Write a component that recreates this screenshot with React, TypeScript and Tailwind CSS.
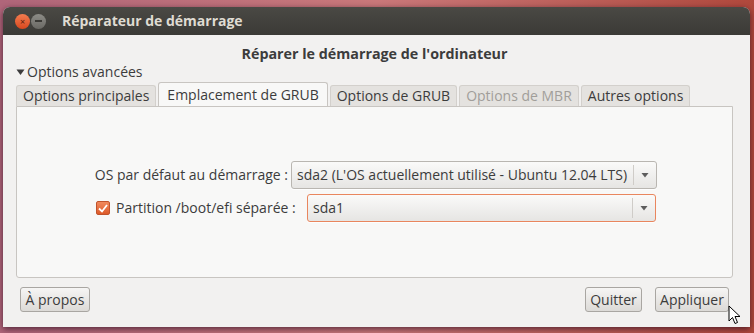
const font = { fontFamily: '"Open Sans", "Noto Sans", sans-serif' }

const tabs = [
  { label: 'Options principales', active: false, disabled: false },
  { label: 'Emplacement de GRUB', active: true, disabled: false },
  { label: 'Options de GRUB', active: false, disabled: false },
  { label: 'Options de MBR', active: false, disabled: true },
  { label: 'Autres options', active: false, disabled: false },
]

function Arrow() {
  return (
    <svg width="8" height="6" viewBox="0 0 8 6" className="text-[#5d5d5d]">
      <path d="M0.5 1 L7.5 1 L4 5.5 Z" fill="currentColor" />
    </svg>
  )
}

function Combo({ value, width, focused }: { value: string; width: string; focused?: boolean }) {
  return (
    <div
      className={`flex h-[28px] ${width} items-center rounded-[3px] border bg-gradient-to-b from-[#fafaf9] to-[#e6e5e3] shadow-[0_1px_0_rgba(255,255,255,0.8)] ${
        focused ? 'border-[#e9865e]' : 'border-[#b9b6b1]'
      }`}
    >
      <div className="flex-1 truncate pl-[5px] text-[14px] leading-[18px] text-[#3c3c3c]">{value}</div>
      <div className="flex h-[20px] w-[23px] items-center justify-center border-l border-[#cfccc8]">
        <Arrow />
      </div>
    </div>
  )
}

function Button({ label, width }: { label: string; width: string }) {
  return (
    <div
      className={`flex h-[25px] ${width} items-center justify-center rounded-[3px] border border-[#a9a6a2] bg-gradient-to-b from-[#f6f5f4] to-[#dcdad7] text-[14px] leading-[18px] text-[#3c3c3c]`}
    >
      {label}
    </div>
  )
}

export default function App() {
  return (
    <div
      style={font}
      className="relative h-[333px] w-[754px] overflow-hidden bg-gradient-to-r from-[#b0667a] via-[#c9787a] to-[#b0483c] px-[3px] pt-[7px]"
    >
      <div className="flex h-[320px] w-[747px] flex-col overflow-hidden rounded-t-[7px] bg-[#f2f1f0] shadow-[0_2px_6px_rgba(40,10,30,0.7)]">
        {/* title bar */}
        <div className="flex h-[28px] items-center bg-gradient-to-b from-[#4a4944] to-[#3b3a36] pl-[12px]">
          <div className="flex h-[15px] w-[15px] items-center justify-center rounded-full bg-gradient-to-b from-[#f37c4f] to-[#d8471c] text-[9px] leading-none text-[#5a1d0c]">
            ×
          </div>
          <div className="ml-[1px] flex h-[15px] w-[15px] items-center justify-center rounded-full bg-gradient-to-b from-[#8d8c87] to-[#6a6964]">
            <div className="h-[1.5px] w-[7px] bg-[#3b3a36]" />
          </div>
          <div className="ml-[16px] text-[14px] font-bold leading-[18px] text-[#dfdbd2]">Réparateur de démarrage</div>
        </div>

        {/* body */}
        <div className="flex flex-1 flex-col pl-[13px] pr-[17px] leading-[18px]">
          <div className="mt-[10px] text-center text-[14.3px] font-bold text-[#3c3c3c]">
            Réparer le démarrage de l'ordinateur
          </div>
          <div className="mt-0 flex items-center gap-[2px] text-[14px] text-[#3c3c3c]">
            <svg width="9" height="8" viewBox="0 0 9 8">
              <path d="M0.5 1.5 L8.5 1.5 L4.5 7 Z" fill="#3c3c3c" />
            </svg>
            Options avancées
          </div>

          {/* tabs */}
          <div className="mt-[1px] flex items-end gap-[2px]">
            {tabs.map((t) => (
              <div
                key={t.label}
                className={`flex items-center rounded-t-[3px] border border-b-0 text-[14px] ${
                  t.active
                    ? 'h-[24px] border-[#c8c5c1] bg-[#f8f8f7] px-[8px] text-[#3c3c3c]'
                    : 'h-[21px] border-[#d3d0cc] bg-[#e4e2df] px-[6px] ' + (t.disabled ? 'text-[#a19e9a]' : 'text-[#3c3c3c]')
                }`}
              >
                {t.label}
              </div>
            ))}
          </div>

          {/* panel */}
          <div className="flex h-[172px] flex-col rounded-b-[3px] border border-[#c8c5c1] bg-[#f8f8f7] pt-[54px]">
            <div className="flex items-center">
              <div className="w-[271px] text-right text-[14px] text-[#3c3c3c]">OS par défaut au démarrage :</div>
              <div className="ml-[3px]">
                <Combo value="sda2 (L'OS actuellement utilisé - Ubuntu 12.04 LTS)" width="w-[366px]" />
              </div>
            </div>
            <div className="mt-[5px] flex items-center">
              <div className="ml-[79px] flex h-[14px] w-[14px] items-center justify-center rounded-[2px] border border-[#c0532c] bg-gradient-to-b from-[#f08a5d] to-[#dd5a28]">
                <svg width="10" height="9" viewBox="0 0 10 9">
                  <path d="M1 4.5 L4 7.5 L9 1" fill="none" stroke="#fff" strokeWidth="1.8" />
                </svg>
              </div>
              <div className="ml-[6px] w-[186px] text-[14px] text-[#3c3c3c]">Partition /boot/efi séparée :</div>
              <div className="ml-[5px]">
                <Combo value="sda1" width="w-[349px]" focused />
              </div>
            </div>
          </div>

          {/* buttons */}
          <div className="mt-[9px] flex items-center pl-[4px] pr-[4px]">
            <Button label="À propos" width="w-[70px]" />
            <div className="flex-1" />
            <Button label="Quitter" width="w-[57px]" />
            <div className="w-[13px]" />
            <Button label="Appliquer" width="w-[74px]" />
          </div>
        </div>
      </div>

      {/* mouse cursor */}
      <svg className="absolute left-[728px] top-[305px]" width="14" height="21" viewBox="0 0 14 21">
        <path
          d="M1 1 L1 16 L4.5 12.5 L7 18.5 L9.5 17.5 L7 11.5 L12 11.5 Z"
          fill="#fff"
          stroke="#000"
          strokeWidth="1"
          strokeLinejoin="round"
        />
      </svg>
    </div>
  )
}
